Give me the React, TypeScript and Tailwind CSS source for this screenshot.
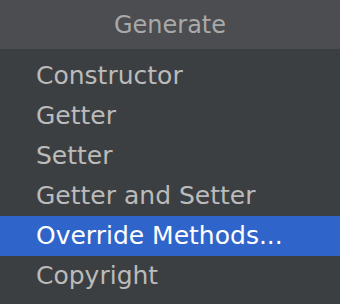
const items = [
  "Constructor",
  "Getter",
  "Setter",
  "Getter and Setter",
  "Override Methods...",
  "Copyright",
];

const selected = "Override Methods...";

export default function App() {
  return (
    <div className="h-[304px] w-[340px] overflow-hidden bg-[#3c3f41] font-['DejaVu_Sans',sans-serif]">
      <div className="flex h-[49px] items-center justify-center bg-[#4b4d50] text-[24px] text-[#a9a9a9]">
        Generate
      </div>
      <ul className="pt-[7px]">
        {items.map((item) => (
          <li
            key={item}
            className={`flex h-[40px] items-center pl-[36px] text-[25px] ${
              item === selected ? "bg-[#2f65ca] text-white" : "text-[#bbbbbb]"
            }`}
          >
            {item}
          </li>
        ))}
      </ul>
    </div>
  );
}
